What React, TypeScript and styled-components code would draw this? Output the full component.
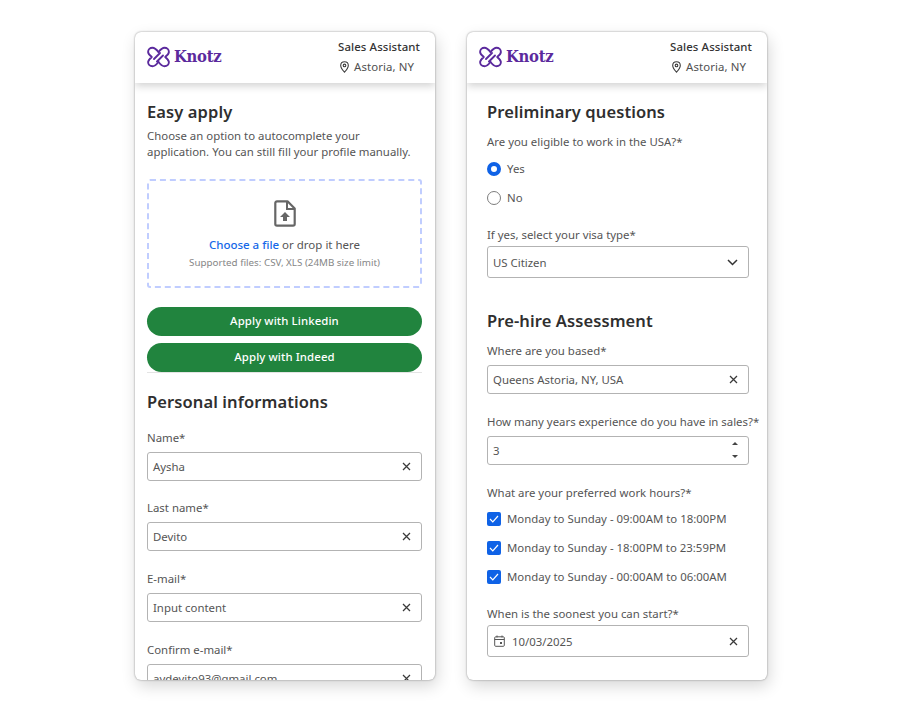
import React from "react";
import styled, { createGlobalStyle } from "styled-components";

const Global = createGlobalStyle`
  html, body { margin: 0; padding: 0; background: #fff; }
  body { font-family: "Noto Sans", "Open Sans", sans-serif; color: #3d3d3d; }
  * { box-sizing: border-box; }
`;

const Page = styled.div`
  width: 902px;
  height: 722px;
  padding-top: 32px;
  display: flex;
  justify-content: center;
  gap: 32px;
  background: #fff;
  overflow: hidden;
`;
const Phone = styled.section`
  width: 300px;
  height: 648px;
  background: #fff;
  border-radius: 6px;
  overflow: hidden;
  display: flex;
  flex-direction: column;
  box-shadow: 0 0 2px rgba(0,0,0,.45), 2px 6px 16px rgba(0,0,0,.16);
`;
const Header = styled.header`
  height: 51px;
  flex: none;
  display: flex;
  align-items: center;
  justify-content: space-between;
  padding: 0 15px 2px 12px;
  position: relative;
  box-shadow: 0 3px 8px rgba(0,0,0,.18);
`;
const Logo = styled.div`
  display: flex;
  align-items: center;
  gap: 4px;
  color: #5b2a9d;
`;
const LogoWord = styled.span`
  font-family: "DejaVu Serif", serif;
  font-stretch: condensed;
  font-weight: 700;
  font-size: 16.5px;
  letter-spacing: -0.3px;
  line-height: 22px;
`;
const Job = styled.div`
  display: flex;
  flex-direction: column;
  align-items: flex-end;
  gap: 3px;
  font-size: 11.4px;
  line-height: 17px;
  letter-spacing: .1px;
`;
const JobTitle = styled.span`
  font-weight: 500;
  color: #333;
`;
const JobPlace = styled.span`
  display: flex;
  align-items: center;
  gap: 5px;
  padding-right: 6px;
  color: #505050;
`;
const Body = styled.div<{ $left: number; $right: number }>`
  flex: 1;
  min-height: 0;
  padding: 0 ${(p) => p.$right}px 0 ${(p) => p.$left}px;
`;
const Title = styled.h2<{ $top: number }>`
  margin: ${(p) => p.$top}px 0 0;
  font-size: 16.5px;
  line-height: 22px;
  font-weight: 600;
  color: #2f2f2f;
  letter-spacing: .1px;
`;
const Intro = styled.p`
  margin: 5px 0 0;
  font-size: 11.4px;
  line-height: 16px;
  color: #555;
`;
const Drop = styled.div`
  margin-top: 19px;
  height: 109px;
  border: 2px dashed #c0cdff;
  border-radius: 3px;
  display: flex;
  flex-direction: column;
  align-items: center;
  padding-top: 19px;
`;
const DropMain = styled.div`
  margin-top: 10px;
  font-size: 11.5px;
  line-height: 16px;
  color: #555;
`;
const DropLink = styled.span`
  color: #1668e8;
  font-weight: 500;
`;
const DropHint = styled.div`
  margin-top: 3px;
  font-size: 9.8px;
  line-height: 14px;
  color: #868686;
`;
const Apply = styled.button<{ $top: number }>`
  display: block;
  width: 100%;
  height: 29px;
  margin-top: ${(p) => p.$top}px;
  border: 0;
  padding: 0 0 1px;
  border-radius: 15px;
  background: #21843e;
  color: #fff;
  font: 500 11.4px/16px "Noto Sans", sans-serif;
  letter-spacing: .1px;
`;
const Rule = styled.hr`
  margin: 0;
  border: 0;
  height: 1px;
  background: #e4e4e4;
`;
const Field = styled.div<{ $top: number }>`
  margin-top: ${(p) => p.$top}px;
`;
const Label = styled.div`
  font-size: 11.4px;
  line-height: 16px;
  color: #555;
  white-space: nowrap;
`;
const Input = styled.div<{ $h?: number; $pad?: number; $lead?: boolean }>`
  margin-top: ${(p) => p.$pad ?? 6}px;
  height: ${(p) => p.$h ?? 29}px;
  border: 1px solid #b3b3b3;
  border-radius: 3px;
  background: #fff;
  display: flex;
  align-items: center;
  gap: ${(p) => (p.$lead ? 7 : 6)}px;
  padding: 0 10px 0 ${(p) => (p.$lead ? 6 : 5)}px;
  font-size: 11.4px;
  color: #555;
`;
const Value = styled.span`
  flex: 1;
  white-space: nowrap;
`;
const Option = styled.div<{ $top: number }>`
  margin-top: ${(p) => p.$top}px;
  height: 17px;
  display: flex;
  align-items: center;
  gap: 6px;
  font-size: 11.4px;
  color: #555;
  white-space: nowrap;
`;
const Radio = styled.span<{ $on?: boolean }>`
  width: 14px;
  height: 14px;
  flex: none;
  border-radius: 50%;
  border: ${(p) => (p.$on ? "4px solid #0f62e6" : "1.2px solid #7d7d7d")};
  background: #fff;
`;
const Check = styled.span`
  width: 14px;
  height: 14px;
  flex: none;
  border-radius: 2px;
  background: #0f62e6;
  display: flex;
  align-items: center;
  justify-content: center;
`;
const Spin = styled.span`
  display: flex;
  flex-direction: column;
  gap: 10px;
  padding-bottom: 1px;
`;

const Close = () => (
  <svg width="9" height="9" viewBox="0 0 9 9" fill="none" stroke="#3a3a3a" strokeWidth="1.25">
    <path d="M1 1l7 7M8 1l-7 7" />
  </svg>
);
const Pin = () => (
  <svg width="9" height="12" viewBox="0 0 9 12" fill="none" stroke="#3f3f3f" strokeWidth="1.1">
    <path d="M4.5.7C2.4.7.7 2.3.7 4.4c0 2.6 3.8 6.8 3.8 6.8s3.8-4.2 3.800-6.800C8.300 2.300 6.600.7 4.500.7z" />
    <circle cx="4.500" cy="4.400" r="1.300" />
  </svg>
);
const Knot = () => (
  <svg width="23" height="22" viewBox="0 0 23 21" fill="none" stroke="#5b2a9d" strokeWidth="1.9" strokeLinecap="round" strokeLinejoin="round">
    <path d="M11.500 5.500C9.500 3 8 1.200 5.500 1.200 3 1.200 1.100 3 1.100 5.400 1.100 7.500 3 9 4.800 10.500 3 12 1.100 13.500 1.100 15.600 1.100 18 3 19.800 5.500 19.800 8 19.800 9.500 18 11.500 15.500" />
    <path d="M11.500 5.500C13.500 3 15 1.200 17.500 1.200 20 1.200 21.900 3 21.900 5.400 21.900 7.500 20 9 18.200 10.500 20 12 21.900 13.500 21.900 15.600 21.900 18 20 19.800 17.500 19.800 15 19.800 13.500 18 11.500 15.500" />
    <path d="M7 12.500L13 6.500M10 15L16 9" />
  </svg>
);
const FileUp = () => (
  <svg width="22" height="27" viewBox="0 0 22 27" fill="none">
    <path d="M3 1.300h10.500L20.700 8.500V24a1.700 1.700 0 0 1-1.700 1.700H3A1.700 1.700 0 0 1 1.300 24V3A1.700 1.700 0 0 1 3 1.300z" stroke="#666" strokeWidth="2.200" strokeLinejoin="round" />
    <path d="M13 1.500V9h7.500" stroke="#666" strokeWidth="2" />
    <path d="M11 12l5 5h-3v4H9v-4H6z" fill="#666" />
  </svg>
);
const Chevron = () => (
  <svg width="11" height="7" viewBox="0 0 11 7" fill="none" stroke="#333" strokeWidth="1.5">
    <path d="M1 1l4.500 4.500L10 1" />
  </svg>
);
const Tick = () => (
  <svg width="10" height="8" viewBox="0 0 10 8" fill="none" stroke="#fff" strokeWidth="1.200">
    <path d="M1 4l2.800 2.800L9 1" />
  </svg>
);
const Calendar = () => (
  <svg width="11" height="12" viewBox="0 0 11 12" fill="none" stroke="#555" strokeWidth="1">
    <rect x=".7" y="1.800" width="9.600" height="9.500" rx="1" />
    <path d="M.7 4.500h9.600M3 .5v2M8 .5v2" />
    <rect x="6" y="7" width="2" height="2" fill="#555" stroke="none" />
  </svg>
);
const Caret = ({ up }: { up?: boolean }) => (
  <svg width="6" height="3" viewBox="0 0 6 3" fill="#444">
    <path d={up ? "M3 0l3 3H0z" : "M0 0h6L3 3z"} />
  </svg>
);

const Head = () => (
  <Header>
    <Logo>
      <Knot />
      <LogoWord>Knotz</LogoWord>
    </Logo>
    <Job>
      <JobTitle>Sales Assistant</JobTitle>
      <JobPlace>
        <Pin />
        Astoria, NY
      </JobPlace>
    </Job>
  </Header>
);

const ClearField = ({ top, label, value }: { top: number; label: string; value: string }) => (
  <Field $top={top}>
    <Label>{label}</Label>
    <Input>
      <Value>{value}</Value>
      <Close />
    </Input>
  </Field>
);

const hours = [
  "Monday to Sunday - 09:00AM to 18:00PM",
  "Monday to Sunday - 18:00PM to 23:59PM",
  "Monday to Sunday - 00:00AM to 06:00AM",
];

export default function App() {
  return (
    <>
      <Global />
      <Page>
        <Phone>
          <Head />
          <Body $left={12} $right={13}>
            <Title $top={18}>Easy apply</Title>
            <Intro>
              Choose an option to autocomplete your
              <br />
              application. You can still fill your profile manually.
            </Intro>
            <Drop>
              <FileUp />
              <DropMain>
                <DropLink>Choose a file</DropLink> or drop it here
              </DropMain>
              <DropHint>Supported files: CSV, XLS (24MB size limit)</DropHint>
            </Drop>
            <Apply $top={19}>Apply with Linkedin</Apply>
            <Apply $top={7}>Apply with Indeed</Apply>
            <Rule />
            <Title $top={18}>Personal informations</Title>
            <ClearField top={17} label="Name*" value="Aysha" />
            <ClearField top={19} label="Last name*" value="Devito" />
            <ClearField top={20} label="E-mail*" value="Input content" />
            <ClearField top={20} label="Confirm e-mail*" value="aydevito93@gmail.com" />
          </Body>
        </Phone>
        <Phone>
          <Head />
          <Body $left={20} $right={18}>
            <Title $top={18}>Preliminary questions</Title>
            <Field $top={11}>
              <Label>Are you eligible to work in the USA?*</Label>
            </Field>
            <Option $top={10}>
              <Radio $on />
              Yes
            </Option>
            <Option $top={12}>
              <Radio />
              No
            </Option>
            <Field $top={21}>
              <Label>If yes, select your visa type*</Label>
              <Input $h={32} $pad={3}>
                <Value>US Citizen</Value>
                <Chevron />
              </Input>
            </Field>
            <Title $top={32}>Pre-hire Assessment</Title>
            <ClearField top={11} label="Where are you based*" value="Queens Astoria, NY, USA" />
            <Field $top={20}>
              <Label>How many years experience do you have in sales?*</Label>
              <Input $pad={6}>
                <Value>3</Value>
                <Spin>
                  <Caret up />
                  <Caret />
                </Spin>
              </Input>
            </Field>
            <Field $top={20}>
              <Label>What are your preferred work hours?*</Label>
            </Field>
            {hours.map((h, i) => (
              <Option key={h} $top={i === 0 ? 9 : 12}>
                <Check>
                  <Tick />
                </Check>
                {h}
              </Option>
            ))}
            <Field $top={21}>
              <Label>When is the soonest you can start?*</Label>
              <Input $h={32} $pad={3} $lead>
                <Calendar />
                <Value>10/03/2025</Value>
                <Close />
              </Input>
            </Field>
          </Body>
        </Phone>
      </Page>
    </>
  );
}
